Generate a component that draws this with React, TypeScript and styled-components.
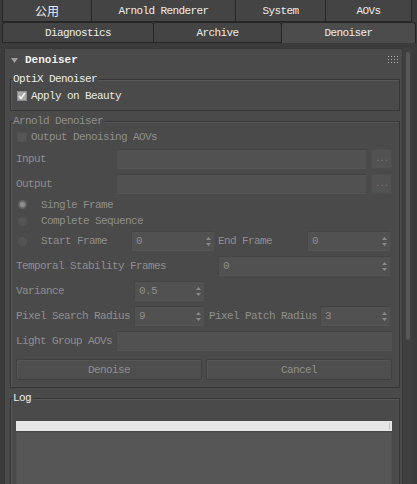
import React from "react";
import styled, { createGlobalStyle } from "styled-components";

const Global = createGlobalStyle`
  html, body { margin: 0; padding: 0; background: #3b3b3b; }
  body { width: 417px; height: 484px; overflow: hidden; }
`;

const FONT = `"Liberation Mono", "DejaVu Sans Mono", "Noto Sans CJK SC", monospace`;

const Screen = styled.div`
  width: 417px;
  height: 484px;
  overflow: hidden;
  background: #3b3b3b;
  font-family: ${FONT};
  font-size: 11px;
  letter-spacing: -0.6px;
  color: #e4e4e4;
  display: flex;
  flex-direction: column;
`;

const TabRow = styled.div<{ $h: number }>`
  display: flex;
  height: ${(p) => p.$h}px;
  padding-left: 3px;
  flex-shrink: 0;
`;

const Tab = styled.div<{ $w: number; $active?: boolean; $top?: boolean; $cjk?: boolean }>`
  width: ${(p) => p.$w}px;
  box-sizing: border-box;
  display: flex;
  align-items: center;
  justify-content: center;
  background: ${(p) => (p.$active ? "#4c4c4c" : "#444444")};
  border: 1px solid #262626;
  border-top: ${(p) => (p.$top ? "none" : "1px solid #262626")};
  border-bottom: ${(p) => (p.$active ? "none" : "1px solid #262626")};
  border-radius: ${(p) => (p.$top ? "0 0 0 0" : "3px 3px 0 0")};
  margin-left: -1px;
  color: #ececec;
  ${(p) =>
    p.$cjk
      ? `font-family: "Noto Sans CJK SC", sans-serif; letter-spacing: 0; font-size: 12px;`
      : ""}
`;

const Gap = styled.div`
  height: 5px;
  flex-shrink: 0;
`;

const Body = styled.div`
  flex: 1;
  display: flex;
  padding-left: 4px;
  min-height: 0;
`;

const Rollout = styled.div`
  width: 399px;
  box-sizing: border-box;
  background: #4a4a4a;
  border: 1px solid #383838;
  border-bottom: none;
  border-radius: 2px 2px 0 0;
  display: flex;
  flex-direction: column;
`;

const RolloutHeader = styled.div`
  height: 22px;
  display: flex;
  align-items: center;
  padding: 0 4px 0 6px;
  flex-shrink: 0;
`;

const RolloutTitle = styled.span`
  font-weight: bold;
  margin-left: 7px;
  color: #f0f0f0;
  letter-spacing: 0;
`;

const Grip = styled.div`
  margin-left: auto;
  margin-top: -2px;
  display: grid;
  grid-template-columns: repeat(4, 1px);
  grid-auto-rows: 1px;
  gap: 2px;
  span {
    width: 1px;
    height: 1px;
    background: #b4b4b4;
  }
`;

const Group = styled.fieldset<{ $pt?: number }>`
  margin: 2px 2px 0 5px;
  padding: ${(p) => p.$pt ?? 3}px 7px 7px 5px;
  border: 1px solid #363636;
  box-shadow: inset 1px 1px 0 #575757;
  min-width: 0;
  display: flex;
  flex-direction: column;
  & + & {
    margin-top: 4px;
  }
`;

const Legend = styled.legend<{ $disabled?: boolean }>`
  margin-left: -3px;
  padding: 0 2px 0 0;
  line-height: 13px;
  background: #4a4a4a;
  color: ${(p) => (p.$disabled ? "#8e8e8e" : "#ececec")};
`;

const Column = styled.div`
  display: flex;
  flex-direction: column;
  gap: 5px;
`;

const Row = styled.div<{ $h?: number; $mt?: number }>`
  display: flex;
  align-items: center;
  height: ${(p) => p.$h ?? 20}px;
  margin-top: ${(p) => p.$mt ?? 0}px;
  flex-shrink: 0;
`;

const Label = styled.span<{ $w?: number; $disabled?: boolean; $ml?: number }>`
  width: ${(p) => (p.$w ? `${p.$w}px` : "auto")};
  flex-shrink: 0;
  white-space: nowrap;
  margin-left: ${(p) => p.$ml ?? 0}px;
  color: ${(p) => (p.$disabled ? "#8e8e8e" : "#e8e8e8")};
`;

const CheckBox = styled.span<{ $checked?: boolean }>`
  width: 10px;
  height: 10px;
  box-sizing: border-box;
  margin-left: 1px;
  margin-right: 4px;
  display: inline-flex;
  align-items: center;
  justify-content: center;
  background: ${(p) => (p.$checked ? "#a8a8a8" : "#565656")};
  border: 1px solid ${(p) => (p.$checked ? "#8a8a8a" : "#505050")};
`;

const Radio = styled.span<{ $on?: boolean }>`
  width: 9px;
  height: 9px;
  border-radius: 50%;
  margin-left: 2px;
  margin-right: 14px;
  flex-shrink: 0;
  background: ${(p) =>
    p.$on
      ? "radial-gradient(circle, #8e8e8e 0 2px, #6a6a6a 3px, #5a5a5a 5px)"
      : "#545454"};
`;

const Field = styled.div<{ $w?: number }>`
  height: 20px;
  box-sizing: border-box;
  ${(p) => (p.$w ? `width: ${p.$w}px;` : "flex: 1;")}
  flex-shrink: 0;
  background: #515151;
  border-top: 1px solid #444444;
  border-left: 1px solid #474747;
  border-bottom: 1px solid #555555;
  display: flex;
  align-items: center;
  padding-left: 4px;
  color: #8e8e8e;
`;

const Browse = styled.div`
  width: 21px;
  height: 20px;
  margin-left: 5px;
  box-sizing: border-box;
  background: #525252;
  border: 1px solid #4c4c4c;
  color: #7a7a7a;
  display: flex;
  align-items: center;
  justify-content: center;
  font-size: 9px;
  letter-spacing: -1px;
`;

const SpinValue = styled.span`
  flex: 1;
`;

const Arrows = () => (
  <svg width="5" height="9" viewBox="0 0 5 9" style={{ marginRight: 3 }}>
    <path d="M2.5 0 L5 3 L0 3 Z" fill="#8a8a8a" />
    <path d="M2.5 9 L5 6 L0 6 Z" fill="#8a8a8a" />
  </svg>
);

const Spinner = ({ value, w }: { value: string; w: number }) => (
  <Field $w={w}>
    <SpinValue>{value}</SpinValue>
    <Arrows />
  </Field>
);

const Buttons = styled.div`
  display: flex;
  gap: 4px;
  margin-top: 3px;
  height: 21px;
`;

const Button = styled.div`
  flex: 1;
  box-sizing: border-box;
  background: #4e4e4e;
  border: 1px solid #414141;
  border-radius: 2px;
  box-shadow: inset 1px 1px 0 #565656;
  display: flex;
  align-items: center;
  justify-content: center;
  color: #8e8e8e;
`;

const LogGroup = styled(Group)`
  padding-bottom: 0;
  border-bottom: none;
  flex: 1;
  gap: 1px;
`;

const Progress = styled.div`
  height: 10px;
  background: #e6e6e6;
  flex-shrink: 0;
  display: flex;
  justify-content: flex-end;
  align-items: center;
  padding-right: 2px;
  &::after {
    content: "";
    width: 1px;
    height: 6px;
    background: #bdbdbd;
  }
`;

const LogArea = styled.div`
  flex: 1;
  background: #565656;
  border: 1px solid #505050;
  border-bottom: none;
`;

const ScrollTrack = styled.div`
  width: 9px;
  background: #3f3f3f;
  padding-top: 4px;
  display: flex;
  justify-content: center;
  flex-shrink: 0;
`;

const ScrollHandle = styled.div`
  width: 4px;
  height: 288px;
  background: #575757;
  border-radius: 2px;
`;

const CheckMark = () => (
  <svg width="8" height="8" viewBox="0 0 8 8">
    <path d="M1 4 L3 6.5 L7 1" stroke="#f4f4f4" strokeWidth="1.6" fill="none" />
  </svg>
);

const Triangle = () => (
  <svg width="7" height="5" viewBox="0 0 7 5">
    <path d="M0 0 L7 0 L3.5 5 Z" fill="#a0a0a0" />
  </svg>
);

export default function App() {
  return (
    <Screen>
      <Global />
      <TabRow $h={22}>
        <Tab $w={90} $top $cjk>
          公用
        </Tab>
        <Tab $w={145} $top>Arnold Renderer</Tab>
        <Tab $w={91} $top>System</Tab>
        <Tab $w={87} $top>AOVs</Tab>
      </TabRow>
      <TabRow $h={21}>
        <Tab $w={152}>Diagnostics</Tab>
        <Tab $w={129}>Archive</Tab>
        <Tab $w={135} $active>
          Denoiser
        </Tab>
      </TabRow>
      <Gap />
      <Body>
        <Rollout>
          <RolloutHeader>
            <Triangle />
            <RolloutTitle>Denoiser</RolloutTitle>
            <Grip>
              {Array.from({ length: 12 }).map((_, i) => (
                <span key={i} />
              ))}
            </Grip>
          </RolloutHeader>

          <Group>
            <Legend>OptiX Denoiser</Legend>
            <Row $h={14}>
              <CheckBox $checked>
                <CheckMark />
              </CheckBox>
              <Label>Apply on Beauty</Label>
            </Row>
          </Group>

          <Group $pt={2}>
            <Legend $disabled>Arnold Denoiser</Legend>
            <Column>
              <Row $h={14}>
                <CheckBox />
                <Label $disabled>Output Denoising AOVs</Label>
              </Row>
              <Row>
                <Label $w={100} $disabled>Input</Label>
                <Field />
                <Browse>...</Browse>
              </Row>
              <Row>
                <Label $w={100} $disabled>Output</Label>
                <Field />
                <Browse>...</Browse>
              </Row>
              <Row $h={13} $mt={-1}>
                <Radio $on />
                <Label $disabled>Single Frame</Label>
              </Row>
              <Row $h={16} $mt={-3}>
                <Radio />
                <Label $disabled>Complete Sequence</Label>
              </Row>
              <Row $mt={-3}>
                <Radio />
                <Label $w={90} $disabled>Start Frame</Label>
                <Spinner value="0" w={83} />
                <Label $w={89} $ml={4} $disabled>End Frame</Label>
                <Spinner value="0" w={83} />
              </Row>
              <Row>
                <Label $w={202} $disabled>Temporal Stability Frames</Label>
                <Spinner value="0" w={172} />
              </Row>
              <Row>
                <Label $w={118} $disabled>Variance</Label>
                <Spinner value="0.5" w={70} />
              </Row>
              <Row>
                <Label $w={118} $disabled>Pixel Search Radius</Label>
                <Spinner value="9" w={70} />
                <Label $w={111} $ml={5} $disabled>Pixel Patch Radius</Label>
                <Spinner value="3" w={70} />
              </Row>
              <Row>
                <Label $w={100} $disabled>Light Group AOVs</Label>
                <Field />
              </Row>
              <Buttons>
                <Button>Denoise</Button>
                <Button>Cancel</Button>
              </Buttons>
            </Column>
          </Group>

          <LogGroup $pt={16}>
            <Legend>Log</Legend>
            <Progress />
            <LogArea />
          </LogGroup>
        </Rollout>
        <ScrollTrack>
          <ScrollHandle />
        </ScrollTrack>
      </Body>
    </Screen>
  );
}
